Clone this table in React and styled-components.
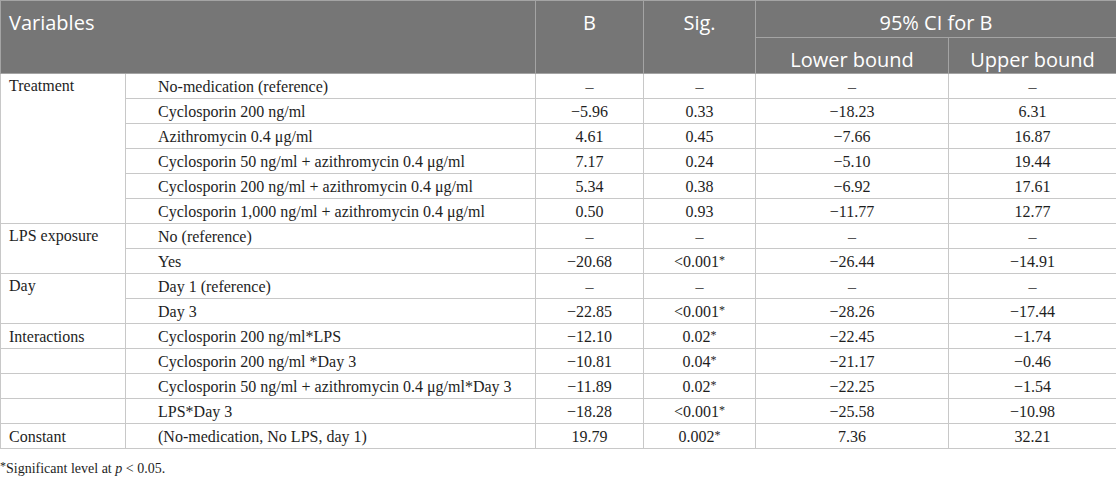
import React from 'react';
import styled, { createGlobalStyle } from 'styled-components';

const GlobalStyle = createGlobalStyle`
  html, body {
    margin: 0;
    padding: 0;
    background: #ffffff;
  }
`;

const Wrapper = styled.div`
  width: 1116px;
  background: #fff;
`;

const Table = styled.table`
  width: 1116px;
  border-collapse: collapse;
  table-layout: fixed;
  font-family: 'Liberation Serif', 'Times New Roman', serif;
  font-size: 16px;
  color: #1e1e1e;
`;

const HeadCell = styled.th`
  background: #767676;
  color: #ffffff;
  font-family: 'Open Sans', 'Noto Sans', sans-serif;
  font-weight: 400;
  font-size: 20px;
  line-height: 24px;
  height: ${(p) => (p.$tall ? 73 : 36)}px;
  padding: ${(p) => (p.$tall ? '10px 8px 0' : '10px 8px 0')};
  vertical-align: top;
  text-align: ${(p) => (p.$left ? 'left' : 'center')};
  border: 1px solid #a4a4a4;
  box-sizing: border-box;
  white-space: nowrap;
`;

const Cell = styled.td`
  height: 25px;
  padding: 0 0 0 ${(p) => (p.$indent ? 32 : p.$left ? 8 : 0)}px;
  line-height: 23px;
  text-align: ${(p) => (p.$left || p.$indent ? 'left' : 'center')};
  vertical-align: ${(p) => (p.$top ? 'top' : 'middle')};
  border: 1px solid #c8c8c8;
  box-sizing: border-box;
  white-space: nowrap;
`;

const Dash = styled.span`
  color: #555;
`;

const Footnote = styled.p`
  margin: 12px 0 0 0;
  font-family: 'Liberation Serif', 'Times New Roman', serif;
  font-size: 14px;
  color: #1e1e1e;
`;

const Sup = styled.sup`
  font-size: 12px;
  vertical-align: 3px;
  line-height: 0;
`;

const D = () => <Dash>–</Dash>;

const groups = [
  {
    label: 'Treatment',
    merged: true,
    rows: [
      ['No-medication (reference)', null],
      ['Cyclosporin 200 ng/ml', ['−5.96', '0.33', '−18.23', '6.31']],
      ['Azithromycin 0.4 μg/ml', ['4.61', '0.45', '−7.66', '16.87']],
      ['Cyclosporin 50 ng/ml + azithromycin 0.4 μg/ml', ['7.17', '0.24', '−5.10', '19.44']],
      ['Cyclosporin 200 ng/ml + azithromycin 0.4 μg/ml', ['5.34', '0.38', '−6.92', '17.61']],
      ['Cyclosporin 1,000 ng/ml + azithromycin 0.4 μg/ml', ['0.50', '0.93', '−11.77', '12.77']],
    ],
  },
  {
    label: 'LPS exposure',
    merged: true,
    rows: [
      ['No (reference)', null],
      ['Yes', ['−20.68', '<0.001*', '−26.44', '−14.91']],
    ],
  },
  {
    label: 'Day',
    merged: true,
    rows: [
      ['Day 1 (reference)', null],
      ['Day 3', ['−22.85', '<0.001*', '−28.26', '−17.44']],
    ],
  },
  {
    label: 'Interactions',
    merged: false,
    rows: [
      ['Cyclosporin 200 ng/ml*LPS', ['−12.10', '0.02*', '−22.45', '−1.74']],
      ['Cyclosporin 200 ng/ml *Day 3', ['−10.81', '0.04*', '−21.17', '−0.46']],
      ['Cyclosporin 50 ng/ml + azithromycin 0.4 μg/ml*Day 3', ['−11.89', '0.02*', '−22.25', '−1.54']],
      ['LPS*Day 3', ['−18.28', '<0.001*', '−25.58', '−10.98']],
    ],
  },
  {
    label: 'Constant',
    merged: false,
    rows: [['(No-medication, No LPS, day 1)', ['19.79', '0.002*', '7.36', '32.21']]],
  },
];

const renderValue = (v) => {
  if (v.endsWith('*')) {
    return (
      <>
        {v.slice(0, -1)}
        <Sup>*</Sup>
      </>
    );
  }
  return v;
};

const App = () => {
  return (
    <Wrapper>
      <GlobalStyle />
      <Table>
        <colgroup>
          <col style={{ width: 125 }} />
          <col style={{ width: 410 }} />
          <col style={{ width: 108 }} />
          <col style={{ width: 112 }} />
          <col style={{ width: 193 }} />
          <col style={{ width: 168 }} />
        </colgroup>
        <thead>
          <tr>
            <HeadCell $tall $left colSpan={2} rowSpan={2}>
              Variables
            </HeadCell>
            <HeadCell $tall rowSpan={2}>B</HeadCell>
            <HeadCell $tall rowSpan={2}>Sig.</HeadCell>
            <HeadCell colSpan={2}>95% CI for B</HeadCell>
          </tr>
          <tr>
            <HeadCell>Lower bound</HeadCell>
            <HeadCell>Upper bound</HeadCell>
          </tr>
        </thead>
        <tbody>
          {groups.map((g) =>
            g.rows.map(([name, vals], i) => (
              <tr key={g.label + i}>
                {g.merged ? (
                  i === 0 && (
                    <Cell $left $top rowSpan={g.rows.length}>
                      {g.label}
                    </Cell>
                  )
                ) : (
                  <Cell $left>{i === 0 ? g.label : ''}</Cell>
                )}
                <Cell $indent>{name}</Cell>
                {vals
                  ? vals.map((v, k) => <Cell key={k}>{renderValue(v)}</Cell>)
                  : [0, 1, 2, 3].map((k) => (
                      <Cell key={k}>
                        <D />
                      </Cell>
                    ))}
              </tr>
            ))
          )}
        </tbody>
      </Table>
      <Footnote>
        <Sup>*</Sup>Significant level at <i>p</i> &lt; 0.05.
      </Footnote>
    </Wrapper>
  );
};

export default App;
